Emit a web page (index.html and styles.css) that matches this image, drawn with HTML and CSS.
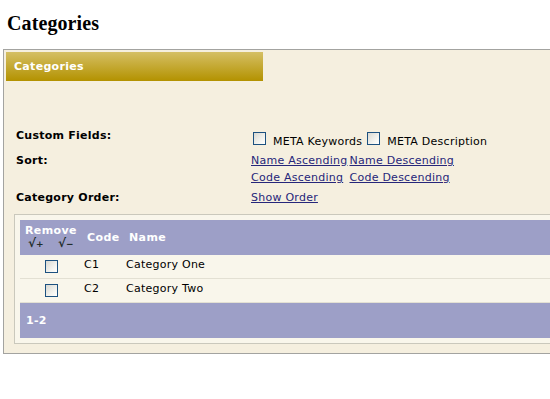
FILE: index.html
```html
<!DOCTYPE html>
<html>
<head>
<meta charset="utf-8">
<title>Categories</title>
<link rel="stylesheet" href="styles.css">
</head>
<body>
<h1 class="page-title">Categories</h1>
<div class="panel">
  <div class="panel-bar">Categories</div>
  <div class="form">
    <div class="label row1">Custom Fields:</div>
    <div class="value row1v"><input type="checkbox" class="cb cb-first"><span class="cb-text">META Keywords</span><input type="checkbox" class="cb cb-next"><span class="cb-text">META Description</span></div>
    <div class="label row2">Sort:</div>
    <div class="value row2 sort-links">
      <a href="#">Name Ascending</a><a href="#">Name Descending</a>
      <a href="#">Code Ascending</a><a href="#">Code Descending</a>
    </div>
    <div class="label row3">Category Order:</div>
    <div class="value row3"><a href="#">Show Order</a></div>
  </div>
  <div class="list-box">
    <table class="list">
      <thead>
        <tr>
          <th class="col-remove"><div class="remove-title">Remove</div><div class="remove-icons"><span class="ri">√<small>+</small></span><span class="ri">√<small>−</small></span></div></th>
          <th class="col-code">Code</th>
          <th class="col-name">Name</th>
        </tr>
      </thead>
      <tbody>
        <tr>
          <td class="cell-cb"><input type="checkbox" class="cb cb-row"></td>
          <td class="cell-code">C1</td>
          <td class="cell-name">Category One</td>
        </tr>
        <tr>
          <td class="cell-cb"><input type="checkbox" class="cb cb-row"></td>
          <td class="cell-code">C2</td>
          <td class="cell-name">Category Two</td>
        </tr>
      </tbody>
      <tfoot>
        <tr><td colspan="3" class="foot">1-2</td></tr>
      </tfoot>
    </table>
  </div>
</div>
</body>
</html>
```
FILE: styles.css
```css
html { overflow: hidden; }
body {
  margin: 0;
  background: #ffffff;
  font-family: "DejaVu Sans", Verdana, sans-serif;
  font-size: 11px;
  letter-spacing: 0.25px;
  color: #000;
}
.page-title {
  font-family: "Liberation Serif", "Times New Roman", serif;
  font-size: 20px;
  line-height: 23px;
  font-weight: bold;
  letter-spacing: 0.1px;
  margin: 12px 0 0 7px;
}
.panel {
  margin: 14px -60px 0 3px;
  border: 1px solid #a3a3a0;
  background: #f5efdf;
  padding: 2px;
}
.panel-bar {
  width: 249px;
  height: 29px;
  line-height: 29px;
  padding-left: 8px;
  color: #fff;
  font-weight: bold;
  letter-spacing: 0.3px;
  background: linear-gradient(to bottom, #d5bf64 0%, #b39200 100%);
}
.form {
  display: grid;
  grid-template-columns: 235px auto;
  margin: 46px 0 0 10px;
  line-height: 17px;
}
.label { font-weight: bold; }
.row1 { height: 25px; }
.row1v { padding-top: 5px; height: 20px; }
.row3 { margin-top: 3px; }
.value a { color: #26267a; text-decoration: underline; }
.sort-links {
  display: grid;
  grid-template-columns: max-content max-content;
  column-gap: 2px;
  justify-content: start;
}
.cb {
  -webkit-appearance: none;
  appearance: none;
  width: 13px;
  height: 13px;
  margin: 0;
  box-sizing: border-box;
  border: 1px solid #1c5180;
  background: linear-gradient(135deg, #d8d8d2 0%, #f6f6f2 70%, #ffffff 100%);
  vertical-align: baseline;
}
.cb-first { margin-left: 2px; }
.cb-next { margin-left: 5px; }
.cb-text { margin-left: 7px; }
.list-box {
  margin: 8px 0 7px 8px;
  border: 1px solid #cac8bc;
  background: #f9f6eb;
  padding: 5px;
}
.list {
  width: 100%;
  border-collapse: separate;
  border-spacing: 0;
}
.list thead th {
  background: #9d9fc7;
  color: #fff;
  font-weight: bold;
  text-align: left;
  height: 35px;
  padding: 0;
  vertical-align: middle;
  letter-spacing: 0.4px;
}
.list thead th.col-remove { width: 61px; vertical-align: top; }
.remove-title { padding: 4px 0 0 5px; line-height: 13px; }
.remove-icons {
  display: flex;
  padding-left: 8px;
  line-height: 12px;
  color: #1f2d2a;
  font-size: 12px;
  letter-spacing: 0;
}
.ri:first-child { width: 30px; }
.ri small { font-size: 9px; font-weight: bold; }
.list thead .col-code { width: 36px; padding-left: 6px; }
.list thead .col-name { padding-left: 6px; }
.list tbody td {
  height: 24px;
  padding: 2px 0 0 3px;
  box-sizing: border-box;
  vertical-align: top;
  line-height: 15px;
  border-bottom: 1px solid #e3e0d3;
  background: #f9f6eb;
}
.list tbody td.cell-cb { padding: 5px 0 0 25px; line-height: 13px; }
.cb-row { display: block; }
.foot {
  background: #9d9fc7;
  color: #fff;
  font-weight: bold;
  height: 35px;
  padding: 0 0 0 6px;
  vertical-align: middle;
}
```
